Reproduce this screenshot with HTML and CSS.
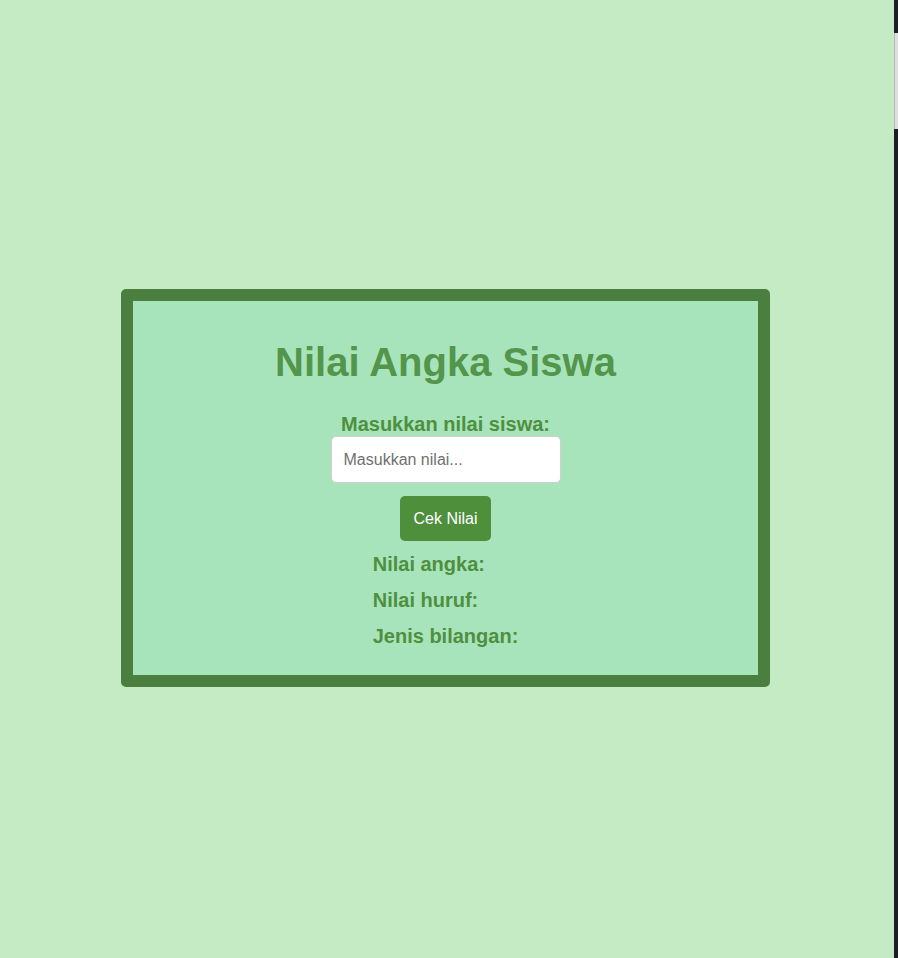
FILE: index.html
```html
<!DOCTYPE html>
<html lang="id">
<head>
<meta charset="utf-8">
<title>Nilai Angka Siswa</title>
<link rel="stylesheet" href="styles.css">
</head>
<body>
<main class="page">
  <section class="card">
    <h1 class="title">Nilai Angka Siswa</h1>
    <label class="label" for="nilai">Masukkan nilai siswa:</label>
    <input class="input" id="nilai" type="text" placeholder="Masukkan nilai...">
    <button class="btn" type="button">Cek Nilai</button>
    <div class="results">
      <p class="result">Nilai angka:</p>
      <p class="result">Nilai huruf:</p>
      <p class="result">Jenis bilangan:</p>
    </div>
  </section>
</main>
<div class="scrollbar"><div class="thumb"></div></div>
</body>
</html>
```
FILE: styles.css
```css
html, body {
  margin: 0;
  padding: 0;
  background: #c5ebc5;
  font-family: "Liberation Sans", Arial, sans-serif;
  height: 958px;
  overflow: hidden;
}
.page {
  padding: 289px 0 0 121px;
}
.card {
  box-sizing: border-box;
  width: 649px;
  height: 398px;
  border: 12px solid #4b7f40;
  border-radius: 5px;
  background: #a8e4bb;
  display: flex;
  flex-direction: column;
  align-items: center;
  padding-top: 37px;
}
.title {
  margin: 0;
  font-size: 40px;
  line-height: 48px;
  font-weight: bold;
  color: #53954b;
}
.label {
  display: block;
  margin-top: 26px;
  font-size: 20px;
  line-height: 24px;
  font-weight: bold;
  color: #4f8f40;
}
.input {
  box-sizing: border-box;
  width: 230px;
  height: 47px;
  border: 1px solid #cfcfcf;
  border-radius: 5px;
  padding: 0 12px;
  font-family: "Liberation Sans", Arial, sans-serif;
  font-size: 16px;
  background: #fff;
  color: #333;
  outline: none;
}
.input::placeholder {
  color: #707070;
}
.btn {
  margin-top: 13px;
  height: 45px;
  padding: 0 13px;
  border: 0;
  border-radius: 5px;
  background: #4e8f3c;
  color: #fff;
  font-family: "Liberation Sans", Arial, sans-serif;
  font-size: 16px;
}
.results {
  margin-top: 5px;
  align-self: center;
}
.result {
  margin: 0;
  font-size: 20px;
  line-height: 36px;
  font-weight: bold;
  color: #4f8f40;
}
.scrollbar {
  position: fixed;
  top: 0;
  right: 0;
  width: 4px;
  height: 958px;
  background: #1b1f25;
}
.thumb {
  margin-top: 33px;
  height: 96px;
  background: #dedede;
  border-left: 1px solid #b8b8b8;
}
```
